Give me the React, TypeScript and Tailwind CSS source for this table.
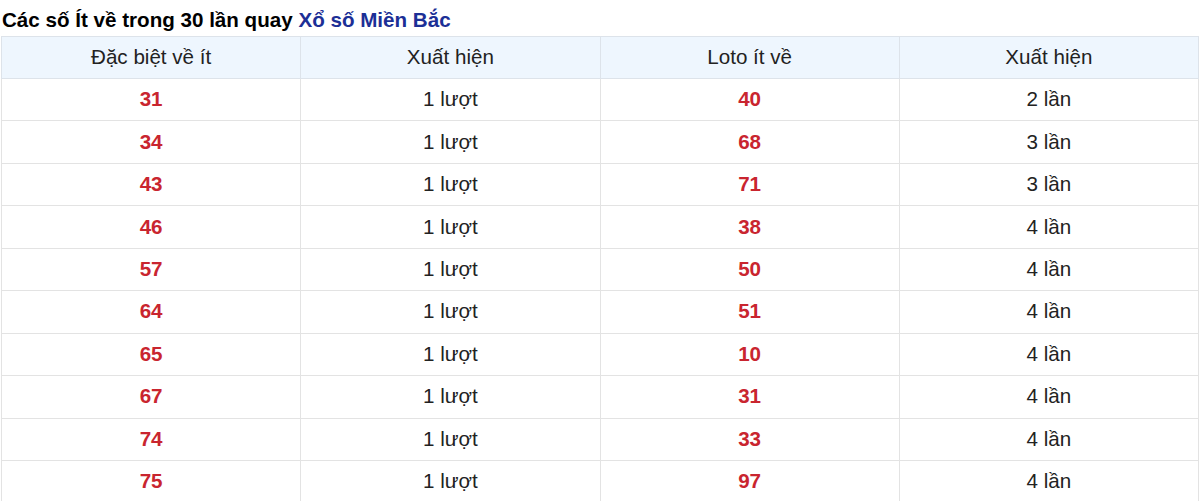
const rows = [
  ["31", "1 lượt", "40", "2 lần"],
  ["34", "1 lượt", "68", "3 lần"],
  ["43", "1 lượt", "71", "3 lần"],
  ["46", "1 lượt", "38", "4 lần"],
  ["57", "1 lượt", "50", "4 lần"],
  ["64", "1 lượt", "51", "4 lần"],
  ["65", "1 lượt", "10", "4 lần"],
  ["67", "1 lượt", "31", "4 lần"],
  ["74", "1 lượt", "33", "4 lần"],
  ["75", "1 lượt", "97", "4 lần"],
];

const App = () => (
  <div className="w-[1200px] bg-white font-['Liberation_Sans',Arial,sans-serif] text-[#222]">
    <h2 className="h-[36px] pt-[8px] pl-[2px] text-[20.6px] leading-[24px] font-bold text-black">
      Các số Ít về trong 30 lần quay <span className="text-[#1c2f96]">Xổ số Miền Bắc</span>
    </h2>
    <table className="ml-px w-[1198px] border-collapse table-fixed text-[20.6px] text-center">
      <thead>
        <tr className="h-[42px] bg-[#eef6fe]">
          <th className="border border-[#dde3ea] font-normal">Đặc biệt về ít</th>
          <th className="border border-[#dde3ea] font-normal">Xuất hiện</th>
          <th className="border border-[#dde3ea] font-normal">Loto ít về</th>
          <th className="border border-[#dde3ea] font-normal">Xuất hiện</th>
        </tr>
      </thead>
      <tbody>
        {rows.map((r, i) => (
          <tr key={i} className="h-[42.45px]">
            <td className="border border-[#e3e3e3] font-bold text-[#c9252f]">{r[0]}</td>
            <td className="border border-[#e3e3e3]">{r[1]}</td>
            <td className="border border-[#e3e3e3] font-bold text-[#c9252f]">{r[2]}</td>
            <td className="border border-[#e3e3e3]">{r[3]}</td>
          </tr>
        ))}
      </tbody>
    </table>
  </div>
);

export default App;
